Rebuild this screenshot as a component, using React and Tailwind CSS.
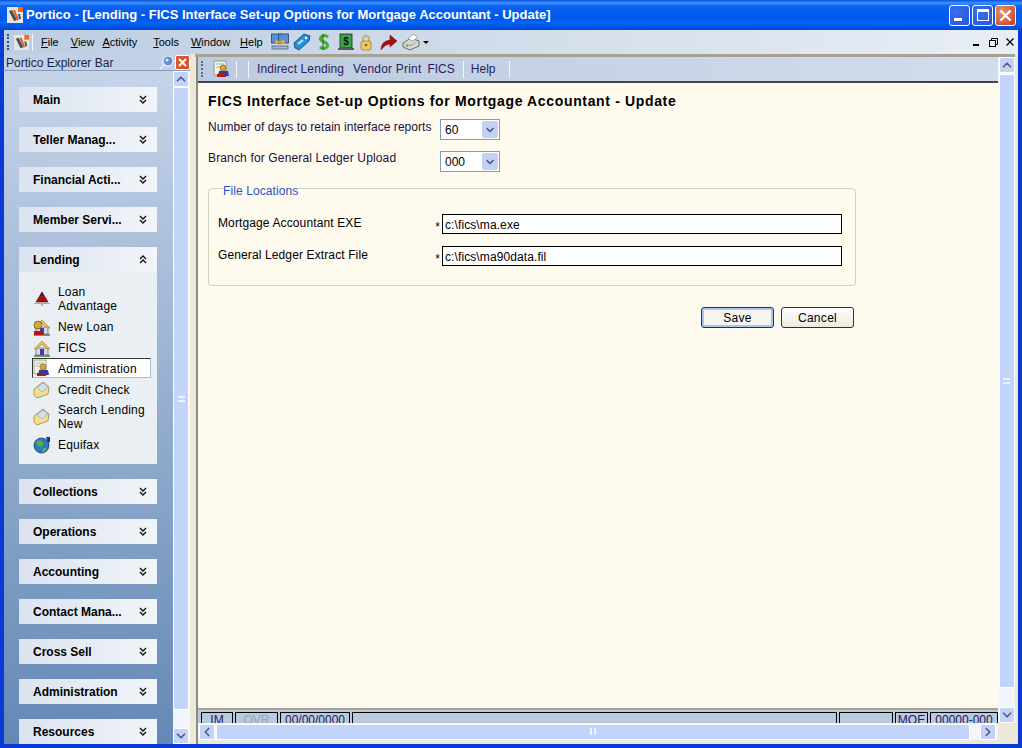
import { ChevronUp, ChevronDown, ChevronLeft, ChevronRight } from "lucide-react";

const sections = ["Main", "Teller Manag...", "Financial Acti...", "Member Servi..."];
const sectionsBelow = ["Collections", "Operations", "Accounting", "Contact Mana...", "Cross Sell", "Administration", "Resources"];

const Logo = ({ size = 16 }) => (
  <svg width={size} height={size} viewBox="0 0 16 16">
    <rect width="16" height="16" fill="#e8e4e0" />
    <rect x="11" y="0" width="5" height="5" fill="#f26a1b" />
    <path d="M2 4 L5 3 L10 13 L7 14 Z" fill="#4a4a55" />
    <path d="M6 3 L8 3 L12 13 L10 13 Z" fill="#d9541e" />
    <path d="M11 7 L13 7 L14 12 L12 12 Z" fill="#3c4a78" />
  </svg>
);

const House = ({ badge }) => (
  <svg width="18" height="18" viewBox="0 0 18 18">
    <path d="M1 16 Q9 12 17 16 L17 18 L1 18 Z" fill="#6aa05a" />
    <path d="M3 9 L3 16 L15 16 L15 9 Z" fill="#d8d8f0" stroke="#5a5a80" strokeWidth="0.7" />
    <path d="M1 10 L9 2 L17 10 L14 10 L9 5 L4 10 Z" fill="#e8c24a" stroke="#8a6a20" strokeWidth="0.5" />
    <rect x="7" y="10" width="4" height="6" fill="#4a3aa0" />
    {badge && (
      <>
        <path d="M1 13 L10 13 L10 17 L1 17 Z" fill="#b01818" />
        <circle cx="5" cy="7" r="4" fill="#d8a830" stroke="#60400a" strokeWidth="0.6" />
      </>
    )}
  </svg>
);

const Cone = () => (
  <svg width="18" height="18" viewBox="0 0 18 18">
    <path d="M1 13 L17 13 L17 14 L1 14 Z" fill="#a8a8a0" />
    <path d="M9 2 L15 12 L3 12 Z" fill="#b00c0c" stroke="#401010" strokeWidth="0.6" />
    <path d="M7 6 L9 2 L11 6 Z" fill="#2a2a2a" />
    <path d="M9 14 L9 16" stroke="#777" strokeWidth="1" />
  </svg>
);

const Paper = () => (
  <svg width="18" height="18" viewBox="0 0 18 18">
    <path d="M1 8 L10 1 L16 6 L15 13 L4 17 L1 14 Z" fill="#f4e08c" stroke="#8a7a40" strokeWidth="0.7" />
    <path d="M4 7 L10 2 L15 6 L9 11 Z" fill="#cfe0f4" stroke="#7a90b0" strokeWidth="0.5" />
  </svg>
);

const Globe = () => (
  <svg width="18" height="18" viewBox="0 0 18 18">
    <circle cx="8.5" cy="9.5" r="7.5" fill="#2a78c8" stroke="#123a70" strokeWidth="0.8" />
    <path d="M3 6 Q7 3 10 6 Q11 10 7 11 Q4 10 3 6 Z" fill="#5ab03c" />
    <path d="M10 12 Q14 11 13 14 Q11 17 9 16 Z" fill="#5ab03c" />
    <path d="M13 1 L17 1 L17 6 L15 7 Z" fill="#1a3a70" />
  </svg>
);

const AdminIcon = () => (
  <svg width="18" height="18" viewBox="0 0 18 18">
    <rect x="1" y="1" width="12" height="14" fill="#f2f2e4" stroke="#8a8a70" strokeWidth="0.8" />
    <path d="M3 4 L11 4 M3 7 L7 7" stroke="#a8b8c8" strokeWidth="1" />
    <circle cx="10" cy="8" r="3" fill="#d8a830" stroke="#60400a" strokeWidth="0.5" />
    <path d="M6 11 L15 11 L16 16 L5 16 Z" fill="#3a3aa0" />
    <path d="M4 14 L13 14 L13 17 L4 17 Z" fill="#b01818" />
  </svg>
);

const ToolIcons = () => (
  <div className="flex items-center ml-[8px]">
    <svg width="18" height="18" viewBox="0 0 18 18">
      <rect x="0.5" y="1" width="10" height="9" fill="#5a90d8" stroke="#24406a" strokeWidth="0.8" />
      <rect x="7.5" y="1" width="10" height="9" fill="#5a90d8" stroke="#24406a" strokeWidth="0.8" />
      <rect x="1" y="13" width="16" height="3" fill="#a8b8d8" stroke="#24406a" strokeWidth="0.6" />
      <path d="M4 9 L14 9 M4 9 L7 7 M4 9 L7 11 M14 9 L11 7 M14 9 L11 11" stroke="#e8b020" strokeWidth="1.5" fill="none" />
    </svg>
    <svg width="18" height="18" viewBox="0 0 18 18" className="ml-[4px]">
      <path d="M1 10 L11 1 L17 3 L16 8 L6 17 L2 15 Z" fill="#2090d8" stroke="#103a70" strokeWidth="0.8" />
      <circle cx="13" cy="5" r="1.3" fill="#fff" />
      <path d="M5 11 L10 7" stroke="#bfe4ff" strokeWidth="2" />
    </svg>
    <svg width="14" height="18" viewBox="0 0 14 18" className="ml-[6px]">
      <path d="M11 4 Q7 1 4 4 Q2 7 7 9 Q12 11 10 14 Q7 17 3 14" fill="none" stroke="#45b02c" strokeWidth="3" />
      <path d="M6 1 L6 17" stroke="#2a5a20" strokeWidth="1" />
    </svg>
    <svg width="18" height="18" viewBox="0 0 18 18" className="ml-[6px]">
      <rect x="3" y="1" width="12" height="14" fill="#3fa04a" stroke="#103010" strokeWidth="0.8" />
      <text x="9" y="12" textAnchor="middle" fontSize="10" fontWeight="700" fill="#062006" fontFamily="Liberation Sans">$</text>
      <rect x="1" y="15" width="16" height="2" fill="#5a5a5a" />
    </svg>
    <svg width="14" height="18" viewBox="0 0 14 18" className="ml-[4px]">
      <path d="M4 8 L4 5 Q7 0 10 5 L10 8" fill="none" stroke="#c8a850" strokeWidth="1.6" />
      <rect x="2" y="8" width="10" height="9" rx="2" fill="#f0c860" stroke="#987020" strokeWidth="0.7" />
      <circle cx="7" cy="12" r="1.3" fill="#886010" />
    </svg>
    <svg width="18" height="18" viewBox="0 0 18 18" className="ml-[7px]">
      <path d="M1 17 Q1 8 10 7 L10 2 L17 8 L10 14 L10 11 Q5 11 1 17 Z" fill="#a80e0e" stroke="#701010" strokeWidth="0.5" />
    </svg>
    <svg width="18" height="18" viewBox="0 0 18 18" className="ml-[4px]">
      <path d="M1 10 L9 5 L17 8 L17 13 L8 17 L1 14 Z" fill="#d8d8d0" stroke="#505050" strokeWidth="0.8" />
      <path d="M6 6 L11 1 L16 4 L11 8 Z" fill="#fff" stroke="#777" strokeWidth="0.6" />
      <path d="M1 10 L8 13 L17 8 L8 12 Z" fill="#8a8a84" />
      <circle cx="5" cy="13" r="0.9" fill="#40a040" />
    </svg>
    <span className="ml-[3px] w-0 h-0 border-l-[3px] border-r-[3px] border-t-[3px] border-l-transparent border-r-transparent border-t-black"></span>
  </div>
);

const Chevrons = ({ up }) => (
  <svg width="8" height="10" viewBox="0 0 8 10" fill="none" stroke="#111" strokeWidth="1.4">
    {up ? (
      <path d="M1 4 L4 1 L7 4 M1 8 L4 5 L7 8" />
    ) : (
      <path d="M1 1 L4 4 L7 1 M1 5 L4 8 L7 5" />
    )}
  </svg>
);

const SectionHead = ({ label, up }) => (
  <div className="h-[25px] flex items-center justify-between pl-[14px] pr-[10px] bg-[linear-gradient(90deg,#dbe3ef,#f2f5f9)] shrink-0">
    <span className="font-bold text-[12px] text-black">{label}</span>
    <Chevrons up={up} />
  </div>
);

const NavItem = ({ icon, children, active, tall }) => (
  <div
    className={
      active
        ? "flex items-center gap-[7px] h-[20px] mb-px ml-[13px] mr-[6px] border border-[#333] border-r-[#a9bcd6] border-b-[#a9bcd6] bg-white"
        : "flex items-center gap-[7px] ml-[14px] " + (tall ? "h-[34px]" : "h-[21px]")
    }
  >
    <span className="w-[18px] shrink-0 flex justify-center">{icon}</span>
    <span className={"leading-[14px] tracking-[0.2px] whitespace-nowrap " + (active ? "pt-px" : "")}>{children}</span>
  </div>
);

const ScrollBtn = ({ children }) => (
  <div className="w-[16px] h-[16px] flex items-center justify-center rounded-[2px] bg-[#c3d2f6] border border-white shrink-0 text-[#4d6185]">
    {children}
  </div>
);

const WinBtn = ({ red, children }) => (
  <div
    className={
      "w-[21px] h-[21px] rounded-[3px] border border-white flex items-center justify-center " +
      (red ? "bg-[radial-gradient(circle_at_30%_30%,#e8916e,#c4401c)]" : "bg-[radial-gradient(circle_at_30%_30%,#3c6cf0,#2a55d8)]")
    }
  >
    {children}
  </div>
);

const StatusBox = ({ w, grow, children, gray }) => (
  <div
    className={
      "h-[17px] border border-black flex justify-center shrink-0 text-[12px] leading-[14px] " +
      (grow ? "flex-1 " : "") +
      (gray ? "text-[#9aa4b0]" : "text-[#202060]")
    }
    style={{ width: w }}
  >
    {children}
  </div>
);

const Select = ({ value }) => (
  <div className="w-[60px] h-[21px] border border-[#7f9db9] bg-white flex items-center justify-between pl-[4px] pr-px">
    <span>{value}</span>
    <span className="w-[16px] h-[17px] bg-[#c1d2f2] rounded-[2px] flex items-center justify-center text-[#4d6185]">
      <ChevronDown size={12} strokeWidth={3.5} />
    </span>
  </div>
);

const FileRow = ({ label, value }) => (
  <div className="flex items-start h-[32px]">
    <span className="w-[215px] leading-[14px] pt-[2px] tracking-[0.12px]">{label}</span>
    <span className="w-[9px] text-center pt-[6px] leading-[14px]">*</span>
    <div className="w-[400px] h-[20px] border border-black bg-white px-[2px] leading-[20px] tracking-[0.1px]">{value}</div>
  </div>
);

export default function App() {
  return (
    <div className="w-[1022px] h-[748px] overflow-hidden flex flex-col bg-[#0a3ad6] font-['Liberation_Sans',Arial,sans-serif] text-[12px] text-black">
      {/* title bar */}
      <div className="h-[30px] shrink-0 flex items-center pl-[7px] pr-[6px] bg-[linear-gradient(180deg,#0a50dc_0%,#3a93ff_10%,#0c62ee_20%,#0058ea_60%,#0064f4_75%,#0048d8_100%)]">
        <Logo />
        <span className="ml-[3px] text-white font-bold text-[13px]">
          Portico - [Lending - FICS Interface Set-up Options for Mortgage Accountant - Update]
        </span>
        <div className="ml-auto flex gap-[2px]">
          <WinBtn><span className="w-[8px] h-[3px] bg-white mt-[9px] mr-[4px]"></span></WinBtn>
          <WinBtn><span className="w-[12px] h-[12px] border border-white border-t-[3px]"></span></WinBtn>
          <WinBtn red>
            <svg width="13" height="13" viewBox="0 0 13 13" stroke="#fff" strokeWidth="2.4"><path d="M1.5 1.5 L11.5 11.5 M11.5 1.5 L1.5 11.5" /></svg>
          </WinBtn>
        </div>
      </div>

      <div className="flex-1 min-h-0 flex flex-col mb-[4px] mx-[4px] bg-[#ece9d8]">
        {/* menu bar */}
        <div className="h-[24px] shrink-0 flex items-center bg-[linear-gradient(90deg,#bccde2,#d5deeb_55%,#e9eef6)]">
          <div className="ml-[3px] w-[2px] h-[16px] border-l-2 border-dotted border-[#3a4a6a]"></div>
          <span className="ml-[5px]"><Logo size={15} /></span>
          <span className="ml-[3px] w-px h-[17px] bg-[#f4f6fa]"></span>
          <div className="ml-[8px] flex text-[11px]">
            <span><u>F</u>ile</span>
            <span className="ml-[12px]"><u>V</u>iew</span>
            <span className="ml-[8px]"><u>A</u>ctivity</span>
            <span className="ml-[16px]"><u>T</u>ools</span>
            <span className="ml-[12px]"><u>W</u>indow</span>
            <span className="ml-[10px]"><u>H</u>elp</span>
          </div>
          <ToolIcons />
          <div className="ml-auto flex items-center gap-[8px] pr-[4px]">
            <span className="w-[6px] h-[2px] bg-black mt-[6px] mr-[2px]"></span>
            <svg width="9" height="9" viewBox="0 0 9 9" fill="none" stroke="#000"><rect x="0.5" y="2.5" width="6" height="6" /><path d="M2.5 2.5 V0.5 H8.5 V6.5 H6.5" /></svg>
            <svg width="8" height="8" viewBox="0 0 8 8" stroke="#000" strokeWidth="1.3"><path d="M0.5 0.5 L7.5 7.5 M7.5 0.5 L0.5 7.5" /></svg>
          </div>
        </div>

        <div className="flex-1 min-h-0 flex">
          {/* explorer bar */}
          <div className="w-[186px] shrink-0 flex flex-col">
            <div className="h-[17px] shrink-0 flex items-center justify-between pl-[2px] bg-[#c2d1e7] border-b border-[#7f9bc0]">
              <span className="text-[#1a2440] pt-px">Portico Explorer Bar</span>
              <div className="flex items-center gap-px">
                <svg width="15" height="15" viewBox="0 0 15 15">
                  <circle cx="9" cy="6" r="5" fill="#5f8fd4" stroke="#fff" strokeWidth="1" />
                  <circle cx="8" cy="5" r="1.6" fill="#dce8fa" />
                  <path d="M6 9 L1 14" stroke="#e6eefa" strokeWidth="1.5" />
                </svg>
                <div className="w-[15px] h-[15px] bg-[#d9562c] border border-white rounded-[2px] flex items-center justify-center">
                  <svg width="9" height="9" viewBox="0 0 9 9" stroke="#fff" strokeWidth="2"><path d="M1 1 L8 8 M8 1 L1 8" /></svg>
                </div>
              </div>
            </div>
            <div className="flex-1 min-h-0 flex">
              <div className="w-[169px] shrink-0 overflow-hidden bg-[linear-gradient(180deg,#c6d4e8,#6488b6)] pt-[16px] pl-[15px] pr-[16px] flex flex-col gap-[15px]">
                {sections.map((s) => (
                  <SectionHead key={s} label={s} />
                ))}
                <div className="shrink-0">
                  <SectionHead label="Lending" up />
                  <div className="bg-[#eaeff4] h-[192px] pt-[10px]">
                    <NavItem icon={<Cone />} tall>Loan<br />Advantage</NavItem>
                    <NavItem icon={<House badge />}>New Loan</NavItem>
                    <NavItem icon={<House />}>FICS</NavItem>
                    <NavItem icon={<AdminIcon />} active>Administration</NavItem>
                    <NavItem icon={<Paper />}>Credit Check</NavItem>
                    <NavItem icon={<Paper />} tall>Search Lending<br />New</NavItem>
                    <NavItem icon={<Globe />}>Equifax</NavItem>
                  </div>
                </div>
                {sectionsBelow.map((s) => (
                  <SectionHead key={s} label={s} />
                ))}
              </div>
              <div className="w-[17px] shrink-0 flex flex-col bg-[#f4f5fb]">
                <ScrollBtn><ChevronUp size={14} strokeWidth={3} /></ScrollBtn>
                <div className="h-[623px] w-[16px] bg-[#c3d4fb] border border-white rounded-[2px] flex items-center justify-center">
                  <span className="w-[7px] h-[6px] border-y-2 border-[#eef2ff]"></span>
                </div>
                <div className="flex-1"></div>
                <ScrollBtn><ChevronDown size={14} strokeWidth={3} /></ScrollBtn>
              </div>
            </div>
          </div>

          {/* main area */}
          <div className="flex-1 min-w-0 ml-[6px] pr-[3px] flex flex-col">
            <div className="h-[3px] shrink-0 bg-[#a5a294] -ml-[1px]"></div>
            <div className="flex-1 min-h-0 flex">
              <div className="flex-1 min-w-0 flex flex-col border-l-[2px] border-[#8f8b7c]">
                {/* page toolbar */}
                <div className="h-[26px] shrink-0 flex items-center bg-[linear-gradient(90deg,#bccbe1,#d2dcea)] border-b-[2px] border-[#444]">
                  <div className="ml-[3px] w-[2px] h-[16px] border-l-2 border-dotted border-[#5a6a8a]"></div>
                  <span className="ml-[10px]"><AdminIcon /></span>
                  <span className="ml-[5px] w-px h-[17px] bg-[#f4f6fa]"></span>
                  <span className="ml-[11px] w-px h-[17px] bg-[#f4f6fa]"></span>
                  <span className="ml-[8px] tracking-[0.1px] text-[#2a2060]">Indirect Lending</span>
                  <span className="ml-[9px] tracking-[0.2px] text-[#2a2060]">Vendor Print</span>
                  <span className="ml-[6px] text-[#2a2060]">FICS</span>
                  <span className="ml-[8px] w-px h-[17px] bg-[#f4f6fa]"></span>
                  <span className="ml-[7px] text-[#2a2060]">Help</span>
                  <span className="ml-[14px] w-px h-[17px] bg-[#f4f6fa]"></span>
                </div>
                {/* form */}
                <div className="flex-1 min-h-0 bg-[#fffaee] pl-[10px] pt-[10px]">
                  <h1 className="text-[14px] font-bold leading-[16px] tracking-[0.65px]">FICS Interface Set-up Options for Mortgage Accountant - Update</h1>
                  <div className="flex mt-[10px] h-[21px]">
                    <span className="w-[232px] leading-[14px] pt-[1px] tracking-[0.05px] text-[#1a1040]">Number of days to retain interface reports</span>
                    <Select value="60" />
                  </div>
                  <div className="flex mt-[11px] h-[21px]">
                    <span className="w-[232px] leading-[14px] tracking-[0.15px] text-[#1a1040]">Branch for General Ledger Upload</span>
                    <Select value="000" />
                  </div>
                  <fieldset className="w-[648px] h-[105px] mt-[9px] border border-[#d0d0bf] rounded-[4px] pl-[9px] pt-[19px]">
                    <legend className="ml-[5px] text-[#2a52c8] leading-[14px] tracking-[0.1px]"><span className="relative top-[3px]">File Locations</span></legend>
                    <FileRow label="Mortgage Accountant EXE" value="c:\fics\ma.exe" />
                    <FileRow label="General Ledger Extract File" value="c:\fics\ma90data.fil" />
                  </fieldset>
                  <div className="w-[646px] flex justify-end gap-[7px] mt-[21px]">
                    <button className="w-[73px] h-[21px] rounded-[3px] border border-[#003c74] shadow-[inset_0_0_0_2px_#a9c4ee] bg-[#f5f4ee] tracking-[0.3px]">Save</button>
                    <button className="w-[73px] h-[21px] rounded-[3px] border border-[#003c74] bg-[linear-gradient(180deg,#fff,#ece9df)] tracking-[0.3px]">Cancel</button>
                  </div>
                </div>
                {/* status strip, cut off by the scrollbar */}
                <div className="h-[15px] shrink-0 border-t-[2px] border-[#a5a294] bg-[#b9cade] overflow-hidden flex gap-[2px] pt-[2px] pl-[3px]">
                  <StatusBox w={32}>IM</StatusBox>
                  <StatusBox w={43} gray>OVR</StatusBox>
                  <StatusBox w={70}>00/00/0000</StatusBox>
                  <StatusBox grow></StatusBox>
                  <StatusBox w={54}></StatusBox>
                  <StatusBox w={33}>MOE</StatusBox>
                  <StatusBox w={68}>00000-000</StatusBox>
                </div>
                {/* horizontal scrollbar */}
                <div className="h-[17px] shrink-0 bg-[#f4f5fb] flex items-center pl-[1px] gap-[1px]">
                  <ScrollBtn><ChevronLeft size={14} strokeWidth={3} /></ScrollBtn>
                  <div className="w-[754px] h-[16px] bg-[#c3d4fb] border border-white rounded-[2px] flex items-center justify-center">
                    <span className="w-[6px] h-[7px] border-x-2 border-[#eef2ff]"></span>
                  </div>
                  <div className="flex-1"></div>
                  <ScrollBtn><ChevronRight size={14} strokeWidth={3} /></ScrollBtn>
                  <div className="w-px"></div>
                </div>
                <div className="h-[4px] shrink-0"></div>
              </div>
              <div className="w-[17px] shrink-0 flex flex-col items-center bg-[#f4f5fb] mb-[21px]">
                <ScrollBtn><ChevronUp size={14} strokeWidth={3} /></ScrollBtn>
                <div className="h-[614px] w-[16px] mt-[1px] bg-[#c3d4fb] border border-white rounded-[2px] flex items-center justify-center">
                  <span className="w-[7px] h-[6px] border-y-2 border-[#eef2ff]"></span>
                </div>
                <div className="flex-1"></div>
                <ScrollBtn><ChevronDown size={14} strokeWidth={3} /></ScrollBtn>
              </div>
            </div>
          </div>
        </div>
      </div>
    </div>
  );
}
